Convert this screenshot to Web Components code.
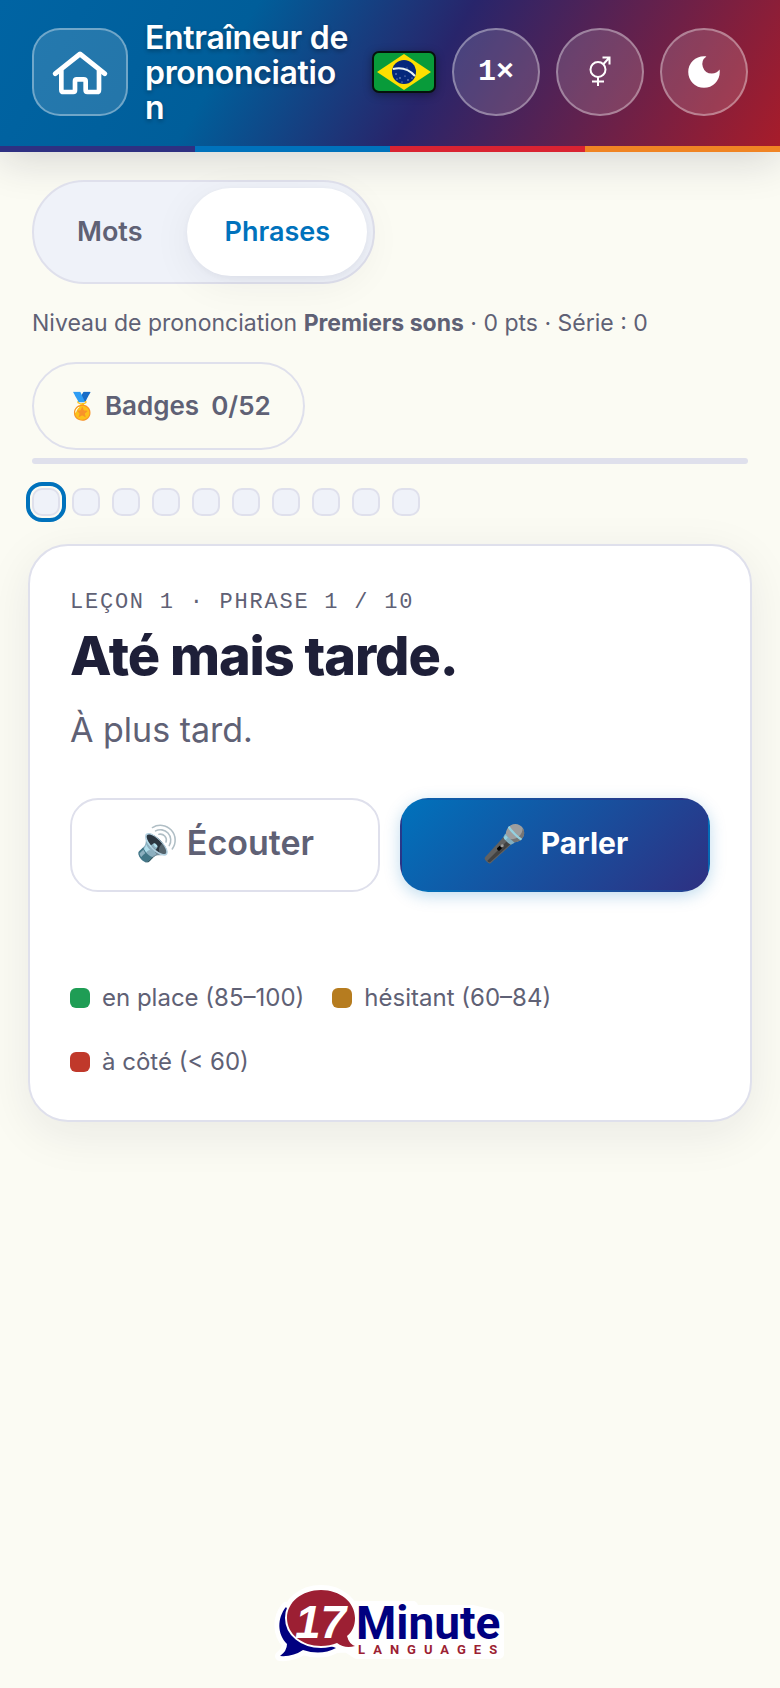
<!DOCTYPE html>
<html lang="fr">
<head>
<meta charset="UTF-8">
<meta name="viewport" content="width=device-width, initial-scale=1">
<title>Entraîneur de prononciation</title>
<style>
  :root {
    --bg: #fbfbf3;
    --surface: #ffffff;
    --surface-alt: #eff2f9;
    --border: #dfe0ec;
    --text: #1e1f38;
    --muted: #5f6175;
    --blue: #0072bc;
    --indigo: #2e3082;
    --red: #d92332;
    --orange: #f08424;
    font-family: Inter, "Liberation Sans", sans-serif;
    color: var(--muted);
    background: var(--bg);
  }
  body {
    margin: 0;
    min-height: 100vh;
    display: flex;
    flex-direction: column;
  }
  main {
    flex: 1;
    display: flex;
    flex-direction: column;
    align-items: flex-start;
    padding: 28px 32px;
  }
</style>
</head>
<body>
  <trainer-header>Entraîneur de prononciation</trainer-header>
  <main>
    <mode-toggle></mode-toggle>
    <level-status level="Premiers sons" points="0" streak="0"></level-status>
    <badge-button count="0/52">Badges</badge-button>
    <progress-track total="10" current="1"></progress-track>
    <phrase-card>
      <span slot="step">Leçon 1 · Phrase 1 / 10</span>
      <span slot="phrase" lang="pt-BR">Até mais tarde.</span>
      <span slot="translation">À plus tard.</span>
      <score-legend slot="legend"></score-legend>
    </phrase-card>
  </main>
  <brand-footer></brand-footer>

<script>
class TrainerHeader extends HTMLElement {
  constructor() {
    super();
    this.attachShadow({ mode: 'open' });
  }

  connectedCallback() {
    this.shadowRoot.innerHTML = `
      <style>
        :host {
          display: block;
          box-shadow: 0 8px 40px rgba(20, 20, 50, 0.16);
          color: #fff;
        }
        header {
          box-sizing: border-box;
          min-height: 146px;
          display: flex;
          align-items: center;
          gap: 16px;
          padding: 19px 32px 21px;
          background: linear-gradient(120deg, #0064a3 0%, #005e9a 30%, #28256b 55%, #a71c2a 100%);
        }
        h1 {
          flex: 1;
          min-width: 0;
          margin: 0;
          padding: 0 4px 0 1px;
          font-size: 32px;
          line-height: 35px;
          font-weight: 600;
          letter-spacing: -0.01em;
          overflow-wrap: anywhere;
          text-shadow: 0 2px 4px rgba(0, 0, 0, 0.3);
        }
        a, button {
          box-sizing: border-box;
          flex: none;
          display: flex;
          align-items: center;
          justify-content: center;
          width: 88px;
          height: 88px;
          padding: 0;
          border: 2px solid rgba(255, 255, 255, 0.35);
          border-radius: 50%;
          background: rgba(255, 255, 255, 0.14);
          color: inherit;
          font: 700 30px/32px "Liberation Mono", monospace;
        }
        a {
          width: 96px;
          border-radius: 28px;
        }
        .flag {
          flex: none;
          filter: drop-shadow(0 2px 4px rgba(0, 0, 0, 0.35));
        }
        .stripe {
          height: 6px;
          background: linear-gradient(90deg, var(--indigo) 25%, var(--blue) 25% 50%, var(--red) 50% 75%, var(--orange) 75%);
        }
      </style>
      <header>
        <a href="#" aria-label="Accueil">
          <svg width="56" height="46" viewBox="159 147 168 138" fill="none" stroke="#fff" stroke-width="15" stroke-linecap="round" stroke-linejoin="round">
            <path d="M169 221 243 162l74 59"/>
            <path d="M187 212v57q0 7 7 7h29q5 0 5-5v-28q0-5 5-5h21q6 0 6 5v28q0 5 5 5h29q6 0 6-7v-57" stroke-width="14"/>
          </svg>
        </a>
        <h1><slot></slot></h1>
        <svg class="flag" width="64" height="42" viewBox="0 0 64 42" role="img" aria-label="Brésil">
          <rect x="1" y="1" width="62" height="40" rx="6" fill="#089b3a" stroke="#06120c" stroke-width="2"/>
          <path d="M5 21 32 3l27 18-27 18z" fill="#fedf00"/>
          <circle cx="32" cy="21" r="12" fill="#04277c"/>
          <path d="M21 18q13-3 22 7" fill="none" stroke="#e8f2f4" stroke-width="2"/>
          <g fill="#b9c8e6"><circle cx="24" cy="23" r=".7"/><circle cx="28" cy="27" r=".7"/><circle cx="33" cy="25" r=".6"/><circle cx="36" cy="29" r=".7"/><circle cx="30" cy="31" r=".6"/><circle cx="40" cy="27" r=".6"/><circle cx="35" cy="17" r=".5"/><circle cx="25" cy="28" r=".6"/></g>
        </svg>
        <button type="button" aria-label="Vitesse">1×</button>
        <button type="button" aria-label="Voix">
          <svg width="24" height="34" viewBox="0 0 24 34" fill="none" stroke="#fff" stroke-width="2">
            <circle cx="10" cy="14.5" r="7.5"/>
            <path d="M10 22v9M4 26.500h12M15.500 9 21 3M14.500 2.500h7v7"/>
          </svg>
        </button>
        <button type="button" aria-label="Mode sombre">
          <svg width="42" height="42" viewBox="0 0 24 24" fill="#fff"><path d="M12 3a9 9 0 1 0 9 9c0-.46-.04-.92-.1-1.36a5.39 5.39 0 0 1-4.4 2.26 5.4 5.4 0 0 1-3.14-9.8C12.92 3.04 12.46 3 12 3z"/></svg>
        </button>
      </header>
      <div class="stripe"></div>
    `;
  }
}

class ModeToggle extends HTMLElement {
  constructor() {
    super();
    this.attachShadow({ mode: 'open' });
  }

  connectedCallback() {
    this.shadowRoot.innerHTML = `
      <style>
        :host {
          display: flex;
          gap: 8px;
          padding: 6px;
          border: 2px solid var(--border);
          border-radius: 52px;
          background: var(--surface-alt);
        }
        button {
          height: 88px;
          padding: 0 37px;
          border: 0;
          border-radius: 44px;
          background: none;
          color: var(--muted);
          font: 600 27px/32px Inter, sans-serif;
        }
        button[aria-pressed="true"] {
          background: var(--surface);
          color: var(--blue);
          box-shadow: 0 8px 40px rgba(20, 20, 50, 0.06), 0 2px 6px rgba(20, 20, 50, 0.04);
        }
      </style>
      <button type="button" aria-pressed="false">Mots</button>
      <button type="button" aria-pressed="true">Phrases</button>
    `;
    const buttons = this.shadowRoot.querySelectorAll('button');
    buttons.forEach(button => {
      button.addEventListener('click', () => {
        buttons.forEach(b => b.setAttribute('aria-pressed', b === button));
      });
    });
  }
}

class LevelStatus extends HTMLElement {
  constructor() {
    super();
    this.attachShadow({ mode: 'open' });
  }

  connectedCallback() {
    this.shadowRoot.innerHTML = `
      <style>
        :host {
          display: block;
          margin: 20px 0;
          font-size: 23px;
          line-height: 38px;
        }
        p { margin: 0; }
      </style>
      <p>Niveau de prononciation <strong>${this.getAttribute('level')}</strong> · ${this.getAttribute('points')} pts · Série : ${this.getAttribute('streak')}</p>
    `;
  }
}

class BadgeButton extends HTMLElement {
  constructor() {
    super();
    this.attachShadow({ mode: 'open' });
  }

  connectedCallback() {
    this.shadowRoot.innerHTML = `
      <style>
        :host { display: block; }
        button {
          box-sizing: border-box;
          display: flex;
          align-items: center;
          gap: 12px;
          height: 88px;
          padding: 0 32px;
          border: 2px solid var(--border);
          border-radius: 44px;
          background: none;
          color: var(--muted);
          font: 600 26px/32px Inter, "Noto Color Emoji", sans-serif;
        }
      </style>
      <button type="button"><span>🏅 <slot></slot></span><span>${this.getAttribute('count')}</span></button>
    `;
  }
}

class ProgressTrack extends HTMLElement {
  constructor() {
    super();
    this.attachShadow({ mode: 'open' });
  }

  connectedCallback() {
    const total = Number(this.getAttribute('total'));
    const current = Number(this.getAttribute('current'));
    let steps = '';
    for (let i = 1; i <= total; i++) {
      steps += `<button type="button" aria-label="Phrase ${i}"${i === current ? ' aria-current="step"' : ''}></button>`;
    }
    this.shadowRoot.innerHTML = `
      <style>
        :host {
          display: block;
          width: 100%;
          margin: 8px 0 28px;
        }
        .bar {
          height: 6px;
          border-radius: 3px;
          background: var(--border);
        }
        .steps {
          display: flex;
          flex-wrap: wrap;
          gap: 12px;
          margin-top: 24px;
        }
        button {
          box-sizing: border-box;
          width: 28px;
          height: 28px;
          padding: 0;
          border: 2px solid var(--border);
          border-radius: 10px;
          background: var(--surface-alt);
        }
        button[aria-current] {
          outline: 4px solid var(--blue);
          outline-offset: 2px;
        }
      </style>
      <div class="bar"></div>
      <div class="steps">${steps}</div>
    `;
  }
}

class PhraseCard extends HTMLElement {
  constructor() {
    super();
    this.attachShadow({ mode: 'open' });
  }

  connectedCallback() {
    this.shadowRoot.innerHTML = `
      <style>
        :host {
          display: block;
          align-self: stretch;
          margin: 0 -4px;
          padding: 40px;
          border: 2px solid var(--border);
          border-radius: 40px;
          background: var(--surface);
          box-shadow: 0 12px 48px rgba(20, 20, 50, 0.08);
        }
        .step {
          margin: 0;
          font: 22px/34px "Liberation Mono", monospace;
          letter-spacing: 0.08em;
          text-transform: uppercase;
        }
        h2 {
          margin: 2px 0 14px;
          color: var(--text);
          font-size: 54px;
          line-height: 68px;
          font-weight: 800;
          letter-spacing: -0.02em;
        }
        .translation {
          margin: 0;
          font-size: 34px;
          line-height: 52px;
        }
        .actions {
          display: grid;
          grid-template-columns: 1fr 1fr;
          gap: 20px;
          margin: 42px 0 80px;
        }
        button {
          box-sizing: border-box;
          height: 94px;
          padding: 0 0 4px;
          border: 2px solid var(--border);
          border-radius: 28px;
          background: var(--surface);
          color: var(--muted);
          font: 600 34px/40px Inter, "Noto Color Emoji", sans-serif;
        }
        .speak {
          display: flex;
          align-items: center;
          justify-content: center;
          gap: 14px;
          border-color: transparent;
          background: linear-gradient(135deg, var(--blue), var(--indigo));
          box-shadow: 0 4px 16px rgba(0, 114, 188, 0.25);
          color: #fff;
          font-size: 30px;
          font-weight: 700;
        }
        .mic { font-size: 36px; }
      </style>
      <p class="step"><slot name="step"></slot></p>
      <h2><slot name="phrase"></slot></h2>
      <p class="translation"><slot name="translation"></slot></p>
      <div class="actions">
        <button type="button">🔊 Écouter</button>
        <button type="button" class="speak"><span class="mic">🎤</span><span>Parler</span></button>
      </div>
      <slot name="legend"></slot>
    `;
  }
}

class ScoreLegend extends HTMLElement {
  constructor() {
    super();
    this.attachShadow({ mode: 'open' });
  }

  connectedCallback() {
    this.shadowRoot.innerHTML = `
      <style>
        :host { display: block; }
        ul {
          display: flex;
          flex-wrap: wrap;
          gap: 28px;
          margin: 0;
          padding: 8px 0 0;
          list-style: none;
          font-size: 24px;
          line-height: 36px;
        }
        li {
          display: flex;
          align-items: center;
          gap: 12px;
        }
        li::before {
          content: "";
          width: 20px;
          height: 20px;
          border-radius: 6px;
          background: var(--swatch);
        }
        .good { --swatch: #1f9d55; }
        .fair { --swatch: #b67c1f; }
        .poor { --swatch: #c0392b; }
      </style>
      <ul>
        <li class="good">en place (85–100)</li>
        <li class="fair">hésitant (60–84)</li>
        <li class="poor">à côté (&lt; 60)</li>
      </ul>
    `;
  }
}

class BrandFooter extends HTMLElement {
  constructor() {
    super();
    this.attachShadow({ mode: 'open' });
  }

  connectedCallback() {
    this.shadowRoot.innerHTML = `
      <style>
        :host {
          display: flex;
          justify-content: center;
          padding-bottom: 24px;
        }
        svg { display: block; }
        text { font-weight: 700; }
        .halo {
          stroke: #fff;
          stroke-width: 10;
          stroke-linejoin: round;
        }
      </style>
      <svg width="230" height="78" viewBox="0 0 230 78" overflow="visible" role="img" aria-label="17 Minute Languages">
        <g class="halo" fill="#fff">
          <ellipse cx="46" cy="32" rx="34" ry="28"/>
          <path d="M11 21C2 32 2 48 12 58q0 7-7 12 13 1 23-6 18 6 33-2l19-1V20h58v4h60l26 6v38H82z"/>
        </g>
        <path d="M11 21C2 32 2 48 12 58q0 7-7 12 13 1 23-6 18 6 33-2L30 50z" fill="#000080"/>
        <path d="M46 4c19 0 34 12 34 28 0 8-3 14-8 18q2 8 8 10-10 3-18-3-7 3-16 3C27 60 12 48 12 32S27 4 46 4z" fill="#9c1f33" stroke="#fff" stroke-width="4" paint-order="stroke"/>
        <text x="20" y="52" font-family="'Liberation Sans Narrow', 'Liberation Sans', sans-serif" font-size="46" font-style="italic" fill="#fff">17</text>
        <text x="81" y="53" font-family="Roboto, sans-serif" font-size="46" fill="#000080">Minute</text>
        <text x="83" y="68" font-family="Roboto, sans-serif" font-size="13" letter-spacing="8" fill="#9c1f33">LANGUAGES</text>
      </svg>
    `;
  }
}

customElements.define('trainer-header', TrainerHeader);
customElements.define('mode-toggle', ModeToggle);
customElements.define('level-status', LevelStatus);
customElements.define('badge-button', BadgeButton);
customElements.define('progress-track', ProgressTrack);
customElements.define('phrase-card', PhraseCard);
customElements.define('score-legend', ScoreLegend);
customElements.define('brand-footer', BrandFooter);
</script>
</body>
</html>
